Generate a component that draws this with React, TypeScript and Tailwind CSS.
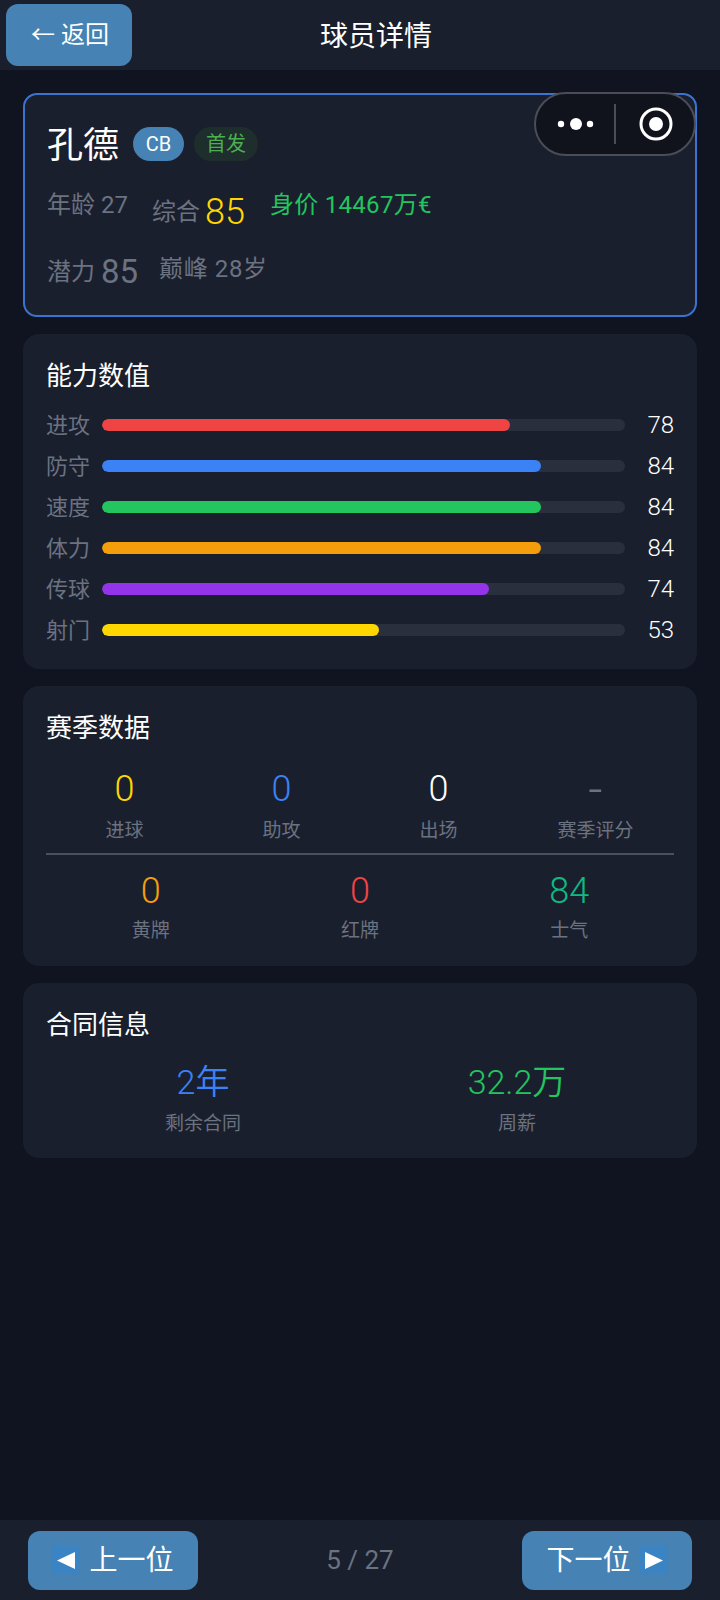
import React from 'react';

type Stat = { label: string; value: string; color: string };

const abilities = [
  { label: '进攻', value: 78, color: 'bg-[#ef4444]' },
  { label: '防守', value: 84, color: 'bg-[#3b82f6]' },
  { label: '速度', value: 84, color: 'bg-[#22c55e]' },
  { label: '体力', value: 84, color: 'bg-[#f59e0b]' },
  { label: '传球', value: 74, color: 'bg-[#9333ea]' },
  { label: '射门', value: 53, color: 'bg-[#ffd700]' },
];

const seasonTop: Stat[] = [
  { label: '进球', value: '0', color: 'text-[#ffd700]' },
  { label: '助攻', value: '0', color: 'text-[#3b82f6]' },
  { label: '出场', value: '0', color: 'text-white' },
  { label: '赛季评分', value: '-', color: 'text-[#6b7280] !text-[50px]' },
];

const seasonBottom: Stat[] = [
  { label: '黄牌', value: '0', color: 'text-[#f59e0b]' },
  { label: '红牌', value: '0', color: 'text-[#ef4444]' },
  { label: '士气', value: '84', color: 'text-[#10b981]' },
];

const contract: Stat[] = [
  { label: '剩余合同', value: '2年', color: 'text-[#3b82f6]' },
  { label: '周薪', value: '32.2万', color: 'text-[#22c55e]' },
];

const StatCell: React.FC<{ stat: Stat; small?: boolean; tight?: boolean }> = ({ stat, small, tight }) => (
  <div className="flex flex-col items-center">
    <span className={`h-[44px] font-[350] leading-[44px] ${small ? 'text-[34px]' : 'text-[36px]'} ${stat.color}`}>{stat.value}</span>
    <span className={`h-[28px] text-[19px] leading-[28px] text-[#6b7280] ${tight ? 'mt-[4px]' : 'mt-[6px]'}`}>{stat.label}</span>
  </div>
);

const Arrow: React.FC<{ flip?: boolean }> = ({ flip }) => (
  <span className="flex h-[28px] w-[28px] items-center justify-center rounded-[3px] bg-[#3b84c4]">
    <svg width="18" height="17" viewBox="0 0 18 17" className={flip ? 'rotate-180' : ''}>
      <path d="M0 8.5 L18 0 L18 17 Z" fill="#ffffff" />
    </svg>
  </span>
);

export default function App() {
  return (
    <div className="flex h-[1600px] w-[720px] flex-col bg-[#0f1420] [font-family:Roboto,'Noto_Sans_CJK_SC',sans-serif]">
      <header className="flex h-[70px] shrink-0 items-center bg-[#1a1f2e] pl-[6px]">
        <button className="flex h-[62px] w-[126px] items-center justify-center gap-[6px] rounded-[12px] bg-[#4682b4] pl-[2px] text-[24px] text-white">
          <span>←</span>
          <span>返回</span>
        </button>
        <h1 className="ml-[188px] mt-[4px] text-[28px] font-normal text-white">球员详情</h1>
      </header>

      <main className="flex flex-1 flex-col gap-[17px] p-[23px]">
        <section className="relative h-[224px] rounded-[14px] border-2 border-[#3b74d0] bg-[#1a1f2e] pl-[22px]">
          <div className="absolute right-[-1px] top-[-3px] flex h-[64px] w-[162px] items-center rounded-full border-2 border-[#4a4d57] bg-[#10131c]">
            <svg width="38" height="14" viewBox="0 0 38 14" className="ml-[21px]">
              <circle cx="4" cy="7" r="3.2" fill="#fff" />
              <circle cx="19" cy="7" r="6" fill="#fff" />
              <circle cx="33" cy="7" r="3.2" fill="#fff" />
            </svg>
            <span className="ml-[19px] h-[40px] w-[2px] bg-[#4a4d57]" />
            <svg width="34" height="34" viewBox="0 0 34 34" className="ml-[23px]">
              <circle cx="17" cy="17" r="15" fill="none" stroke="#fff" strokeWidth="3" />
              <circle cx="17" cy="17" r="7" fill="#fff" />
            </svg>
          </div>

          <div className="flex items-center pt-[29px]">
            <span className="text-[36px] leading-[44px] text-white">孔德</span>
            <span className="mb-[4px] ml-[14px] flex h-[34px] w-[51px] items-center justify-center rounded-full bg-[#4682b4] text-[20px] text-white">CB</span>
            <span className="mb-[4px] ml-[10px] flex h-[34px] w-[64px] items-center justify-center rounded-full bg-[#1e2e2c] text-[20px] text-[#4caf50]">首发</span>
          </div>

          <div className="mt-[16px] flex h-[56px] items-start">
            <span className="mt-[5px] text-[24px] leading-[32px] text-[#6b7280]">年龄 27</span>
            <span className="ml-[24px] mt-[12px] text-[24px] leading-[32px] text-[#6b7280]">综合</span>
            <span className="ml-[5px] mt-[6px] text-[36px] font-[350] leading-[44px] text-[#ffd700]">85</span>
            <span className="ml-[25px] mt-[5px] text-[24px] leading-[32px] tracking-[0.3px] text-[#22c55e]">身价 14467万€</span>
          </div>

          <div className="mt-[8px] flex items-start">
            <span className="mt-[8px] text-[24px] leading-[32px] text-[#6b7280]">潜力</span>
            <span className="ml-[6px] mt-[4px] text-[33px] leading-[40px] text-[#6b7280]">85</span>
            <span className="ml-[21px] mt-[5px] text-[24px] leading-[32px] tracking-[0.6px] text-[#6b7280]">巅峰 28岁</span>
          </div>
        </section>

        <section className="h-[335px] rounded-[16px] bg-[#1a1f2e] px-[23px] pt-[25px]">
          <h2 className="text-[26px] font-normal leading-[34px] text-white">能力数值</h2>
          <div className="mt-[16px] flex flex-col gap-[9px]">
            {abilities.map(item => (
              <div key={item.label} className="flex h-[32px] items-center">
                <span className="w-[56px] text-[22px] text-[#6b7280]">{item.label}</span>
                <div className="h-[12px] w-[523px] overflow-hidden rounded-full bg-[#2a2f3d]">
                  <div className={`h-full rounded-full ${item.color}`} style={{ width: `${item.value}%` }} />
                </div>
                <span className="flex-1 text-right text-[24px] font-[350] text-white">{item.value}</span>
              </div>
            ))}
          </div>
        </section>

        <section className="h-[280px] rounded-[16px] bg-[#1a1f2e] px-[23px] pt-[25px]">
          <h2 className="text-[26px] font-normal leading-[34px] text-white">赛季数据</h2>
          <div className="mt-[22px] grid grid-cols-4">
            {seasonTop.map(stat => <StatCell key={stat.label} stat={stat} />)}
          </div>
          <div className="mt-[8px] h-[2px] bg-[#4b5060]" />
          <div className="mt-[14px] grid grid-cols-3">
            {seasonBottom.map(stat => <StatCell key={stat.label} stat={stat} tight />)}
          </div>
        </section>

        <section className="h-[175px] rounded-[16px] bg-[#1a1f2e] px-[23px] pt-[25px]">
          <h2 className="text-[26px] font-normal leading-[34px] text-white">合同信息</h2>
          <div className="mt-[18px] grid grid-cols-2">
            {contract.map(stat => <StatCell key={stat.label} stat={stat} small />)}
          </div>
        </section>
      </main>

      <footer className="flex h-[80px] shrink-0 items-center justify-between bg-[#1a1f2e] px-[28px]">
        <button className="flex h-[59px] w-[170px] items-center justify-center gap-[9px] rounded-[12px] bg-[#4682b4] text-[28px] text-white">
          <Arrow />
          <span className="mt-[2px]">上一位</span>
        </button>
        <span className="text-[26px] text-[#6b7280]">5 / 27</span>
        <button className="flex h-[59px] w-[170px] items-center justify-center gap-[9px] rounded-[12px] bg-[#4682b4] text-[28px] text-white">
          <span className="mt-[2px]">下一位</span>
          <Arrow flip />
        </button>
      </footer>
    </div>
  );
}
